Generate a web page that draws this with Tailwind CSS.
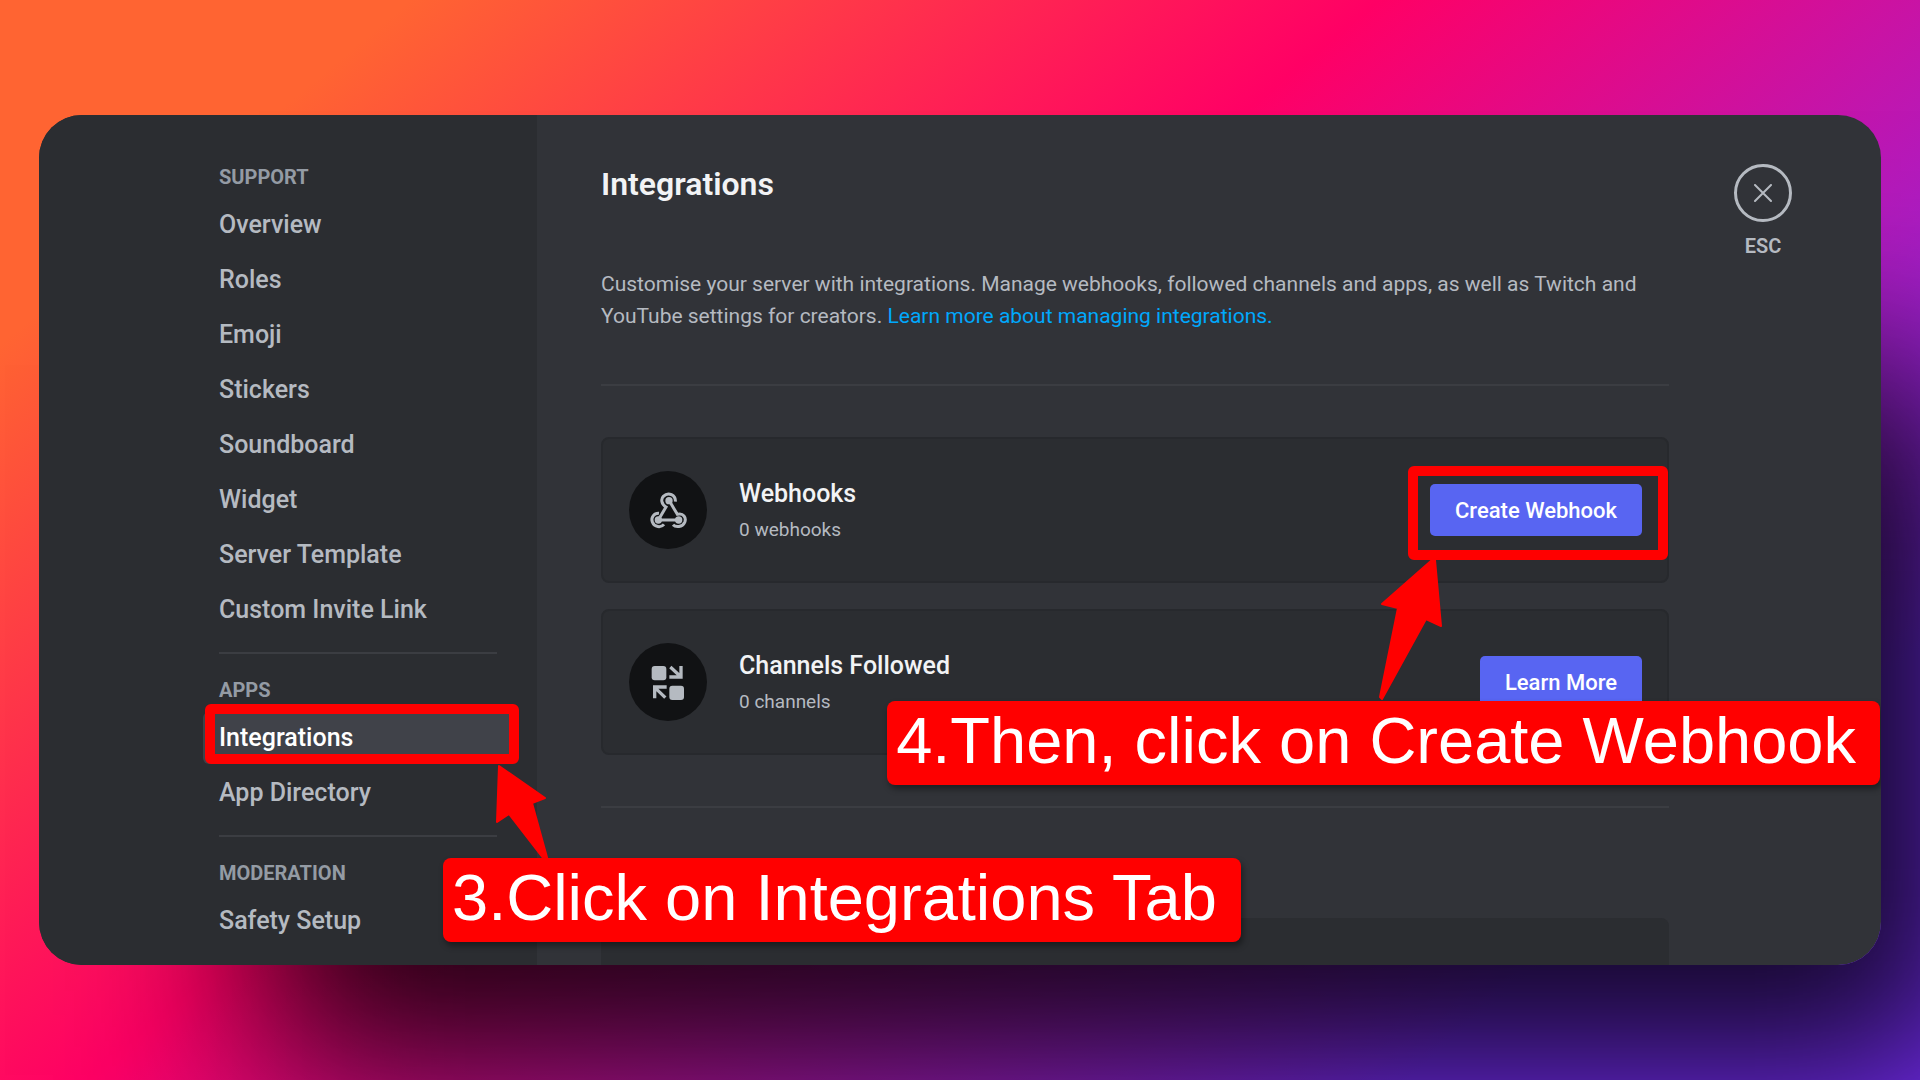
<!DOCTYPE html>
<html lang="en">
<head>
    <meta charset="UTF-8">
    <meta name="viewport" content="width=device-width, initial-scale=1.0">
    <title>Server Settings | Integrations</title>
    <script src="https://cdn.jsdelivr.net/npm/@tailwindcss/browser@4"></script>
</head>
<body class="h-screen overflow-hidden px-[39px] py-[115px] bg-[linear-gradient(140deg,#ff6432_12.8%,#ff0065_43%,#7b2eff_84%)] font-['Roboto','Noto_Sans',sans-serif]">

    <!-- Settings window -->
    <div class="relative h-full rounded-[43px] shadow-[150px_180px_170px_-70px_rgba(0,0,0,0.85)]">
        <div class="relative flex h-full overflow-hidden rounded-[43px] bg-[#313338]">

            <!-- Sidebar -->
            <nav class="w-[498px] shrink-0 bg-[#2b2d31] pt-12 pl-[164px] pr-6 text-[25px] leading-[52px] font-medium text-[#b5bac1]">
                <h2 class="mb-2 px-4 text-[20px] leading-7 font-bold text-[#949ba4]">SUPPORT</h2>
                <ul class="flex flex-col gap-[3px]">
                    <li><a href="#overview" class="block px-4">Overview</a></li>
                    <li><a href="#roles" class="block px-4">Roles</a></li>
                    <li><a href="#emoji" class="block px-4">Emoji</a></li>
                    <li><a href="#stickers" class="block px-4">Stickers</a></li>
                    <li><a href="#soundboard" class="block px-4">Soundboard</a></li>
                    <li><a href="#widget" class="block px-4">Widget</a></li>
                    <li><a href="#template" class="block px-4">Server Template</a></li>
                    <li><a href="#invite" class="block px-4">Custom Invite Link</a></li>
                </ul>
                <hr class="mx-4 mt-4 mb-[22px] border-t-2 border-[#3b3d42]">
                <h2 class="mb-2 px-4 text-[20px] leading-7 font-bold text-[#949ba4]">APPS</h2>
                <ul class="flex flex-col gap-[3px]">
                    <li class="relative">
                        <a href="#integrations" class="block rounded-md bg-[#404249] px-4 text-white">Integrations</a>
                        <span class="pointer-events-none absolute -top-2 bottom-0 left-[2px] -right-[6px] rounded-md border-[10px] border-[#ff0000]"></span>
                    </li>
                    <li><a href="#directory" class="block px-4">App Directory</a></li>
                </ul>
                <hr class="mx-4 mt-4 mb-[22px] border-t-2 border-[#3b3d42]">
                <h2 class="mb-2 px-4 text-[20px] leading-7 font-bold text-[#949ba4]">MODERATION</h2>
                <ul>
                    <li><a href="#safety" class="block px-4">Safety Setup</a></li>
                </ul>
            </nav>

            <!-- Content -->
            <main class="min-w-0 flex-1 pt-12 pl-16 text-[#b5bac1]">
                <h1 class="text-[32px] leading-[42px] font-semibold text-[#f2f3f5]">Integrations</h1>
                <p class="mt-[63px] text-[21px] leading-8">Customise your server with integrations. Manage webhooks, followed channels and apps, as well as Twitch and YouTube settings for creators. <a href="#learn" class="text-[#00a8fc]">Learn more about managing integrations.</a></p>
                <hr class="mt-[52px] mb-[51px] border-t-2 border-[#3b3d42]">

                <section class="flex h-[146px] items-center rounded-lg border-2 border-[#27292d] bg-[#2b2d31] pr-[25px] pl-[26px]">
                    <div class="flex size-[78px] items-center justify-center rounded-full bg-[#111214]">
                        <!-- webhook -->
                        <svg class="size-[39px]" viewBox="175 212 117 117" fill="none" stroke="#b5bac1" stroke-width="9" stroke-linecap="butt">
                            <path d="M203 299 L226 260 C212 252 210 236 218 228 C233 213 256 224 254 244"/>
                            <path d="M235 240 L260 282 C278 277 288 292 282 306 C275 321 255 322 247 313"/>
                            <path d="M264 299 H203 M205 279 C190 278 180 291 185 305 C191 321 211 323 220 312"/>
                            <circle cx="235" cy="241" r="11" fill="#b5bac1" stroke="none"/>
                            <circle cx="203" cy="299" r="11" fill="#b5bac1" stroke="none"/>
                            <circle cx="264" cy="299" r="11" fill="#b5bac1" stroke="none"/>
                        </svg>
                    </div>
                    <div class="ml-8 flex-1 pt-1">
                        <h3 class="text-[25px] leading-9 font-medium text-[#f2f3f5]">Webhooks</h3>
                        <p class="text-[19px] leading-9">0 webhooks</p>
                    </div>
                    <div class="relative">
                        <button type="button" class="block h-[52px] rounded-[5px] bg-[#5865f2] px-[25px] text-[22px] font-medium text-white">Create Webhook</button>
                        <span class="pointer-events-none absolute -top-[18px] -bottom-6 -left-[22px] -right-[26px] rounded-md border-[10px] border-[#ff0000]"></span>
                    </div>
                </section>

                <section class="mt-[26px] flex h-[146px] items-center rounded-lg border-2 border-[#27292d] bg-[#2b2d31] pr-[25px] pl-[26px]">
                    <div class="flex size-[78px] items-center justify-center rounded-full bg-[#111214]">
                        <!-- followed channels -->
                        <svg class="size-9" viewBox="180 731 108 108" fill="none" stroke="#b5bac1" stroke-width="10">
                            <rect x="185" y="737" width="44" height="43" rx="9" fill="#b5bac1" stroke="none"/>
                            <rect x="238" y="796" width="44" height="43" rx="9" fill="#b5bac1" stroke="none"/>
                            <path d="M241 740 L270 767 M273 737 V770 H238"/>
                            <path d="M226 832 L197 804 M194 834 V800 H230"/>
                        </svg>
                    </div>
                    <div class="ml-8 flex-1 pt-1">
                        <h3 class="text-[25px] leading-9 font-medium text-[#f2f3f5]">Channels Followed</h3>
                        <p class="text-[19px] leading-9">0 channels</p>
                    </div>
                    <button type="button" class="block h-[52px] rounded-[5px] bg-[#5865f2] px-[25px] text-[22px] font-medium text-white">Learn More</button>
                </section>

                <hr class="mt-[51px] mb-[110px] border-t-2 border-[#3b3d42]">
                <div class="h-[146px] rounded-lg bg-[#2b2d31]"></div>
            </main>

            <!-- Close -->
            <div class="flex w-[212px] shrink-0 flex-col items-start pt-[49px] pl-[65px] text-[#b5bac1]">
                <button type="button" aria-label="Close" class="flex size-[58px] items-center justify-center rounded-full border-[3px] border-[#b5bac1]">
                    <svg class="size-[18px]" viewBox="0 0 18 18" fill="none" stroke="currentColor" stroke-width="2" stroke-linecap="round"><path d="M1 1 L17 17 M17 1 L1 17"/></svg>
                </button>
                <span class="mt-[10px] w-[58px] text-center text-[20px] leading-7 font-semibold">ESC</span>
            </div>

            <!-- Step 3 -->
            <svg class="absolute top-[648px] left-[456px] h-[98px] w-[56px]" viewBox="495 763 56 98" fill="#ff0000" stroke="#ff0000" stroke-width="2" stroke-linejoin="round">
                <path d="M499 766 L545 798 L532 803 L548 861 L543 858 L509 814 L497 822 Z"/>
            </svg>
            <div class="absolute top-[743px] left-[404px] rounded-lg bg-[#ff0000] pr-6 pb-1 pl-[9px] font-['Liberation_Sans',Arial,sans-serif] text-[65px] leading-[80px] whitespace-nowrap text-white shadow-[2px_4px_6px_rgba(0,0,0,0.4)]">3.Click on Integrations Tab</div>

            <!-- Step 4 -->
            <svg class="absolute top-[443px] left-[1339px] h-[144px] w-[66px]" viewBox="1378 558 66 144" fill="#ff0000" stroke="#ff0000" stroke-width="2" stroke-linejoin="round">
                <path d="M1432 560 L1435 560 L1441 626 L1426 619 L1382 699 L1380 697 L1398 608 L1382 604 Z"/>
            </svg>
            <div class="absolute top-[586px] right-px rounded-lg bg-[#ff0000] pr-6 pb-1 pl-[9px] font-['Liberation_Sans',Arial,sans-serif] text-[65px] leading-[80px] whitespace-nowrap text-white shadow-[2px_4px_6px_rgba(0,0,0,0.4)]">4.Then, click on Create Webhook</div>
        </div>
    </div>

</body>
</html>
